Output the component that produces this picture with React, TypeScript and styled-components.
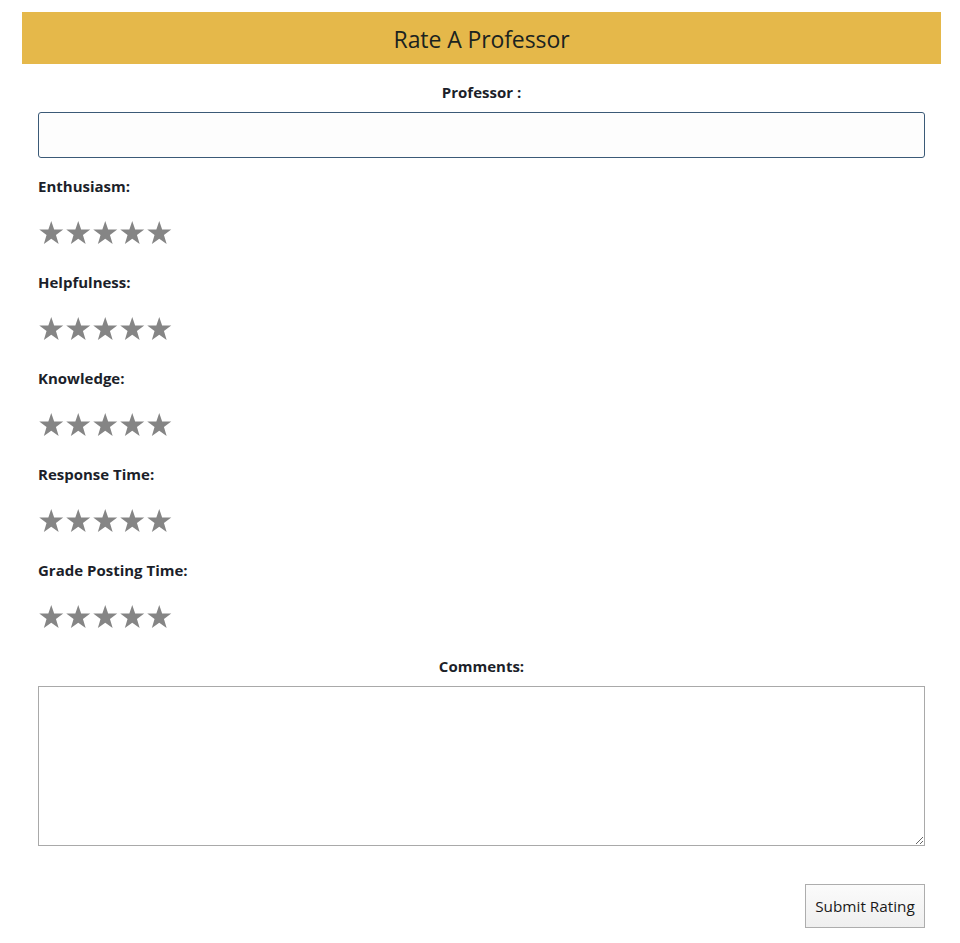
import React from "react";
import styled, { createGlobalStyle } from "styled-components";

const GlobalStyle = createGlobalStyle`
  html, body {
    margin: 0;
    padding: 0;
    background: #ffffff;
  }
  body {
    font-family: "Open Sans", "Noto Sans", "Liberation Sans", sans-serif;
    color: #1c1f2a;
  }
`;

const Page = styled.div`
  padding: 12px 19px 16px 22px;
`;

const Header = styled.header`
  height: 52px;
  background: #e5b84a;
  display: flex;
  align-items: center;
  justify-content: center;
`;

const Title = styled.h1`
  margin: 0;
  font-size: 23px;
  font-weight: 400;
  color: #1a2320;
  letter-spacing: -0.1px;
  line-height: 30px;
  padding-top: 2px;
`;

const Form = styled.form`
  display: flex;
  flex-direction: column;
  padding: 18px 16px 0;
`;

const Label = styled.label<{ $center?: boolean }>`
  display: block;
  font-size: 15px;
  line-height: 20px;
  font-weight: 700;
  color: #1c1f2a;
  text-align: ${(p) => (p.$center ? "center" : "left")};
`;

const TextInput = styled.input`
  box-sizing: border-box;
  margin-top: 10px;
  width: 100%;
  height: 46px;
  border: 1px solid #3b5a77;
  border-radius: 3px;
  background: #fdfdfd;
  outline: none;
  font: inherit;
  padding: 0 10px;
`;

const RatingGroup = styled.div`
  margin-top: 18px;
  display: flex;
  flex-direction: column;

  & + & {
    margin-top: 28px;
  }
`;

const Stars = styled.div`
  margin-top: 24px;
  display: flex;
  gap: 2.5px;
  height: 24px;
  align-items: center;
  padding-left: 1px;
`;

const StarIcon = styled.svg`
  width: 24.5px;
  height: 23px;
  display: block;
  fill: #858585;
`;

const CommentsBlock = styled.div`
  margin-top: 28px;
  display: flex;
  flex-direction: column;
`;

const TextArea = styled.textarea`
  box-sizing: border-box;
  margin-top: 10px;
  width: 100%;
  height: 160px;
  border: 1px solid #a9a9a9;
  border-radius: 0;
  background: #ffffff;
  font: inherit;
  resize: both;
  outline: none;
`;

const ButtonRow = styled.div`
  margin-top: 38px;
  display: flex;
  justify-content: flex-end;
`;

const SubmitButton = styled.button`
  width: 120px;
  height: 44px;
  border: 1px solid #adadad;
  border-radius: 0;
  background: linear-gradient(#fbfbfb, #efefef);
  font-family: "Open Sans", "Noto Sans", sans-serif;
  font-size: 15.3px;
  color: #1a1a1a;
  padding: 0;
  cursor: pointer;
`;

const Star = () => (
  <StarIcon viewBox="0 0 24 23" aria-hidden="true">
    <polygon points="12,0 14.9,8.4 24,8.6 16.7,14 19.4,23 12,17.7 4.6,23 7.3,14 0,8.6 9.1,8.4" />
  </StarIcon>
);

const categories = [
  "Enthusiasm:",
  "Helpfulness:",
  "Knowledge:",
  "Response Time:",
  "Grade Posting Time:",
];

export default function App() {
  return (
    <>
      <GlobalStyle />
      <Page>
        <Header>
          <Title>Rate A Professor</Title>
        </Header>
        <Form onSubmit={(e) => e.preventDefault()}>
          <Label $center htmlFor="professor">Professor :</Label>
          <TextInput id="professor" type="text" />
          {categories.map((c) => (
            <RatingGroup key={c}>
              <Label>{c}</Label>
              <Stars>
                {[0, 1, 2, 3, 4].map((i) => (
                  <Star key={i} />
                ))}
              </Stars>
            </RatingGroup>
          ))}
          <CommentsBlock>
            <Label $center htmlFor="comments">Comments:</Label>
            <TextArea id="comments" />
          </CommentsBlock>
          <ButtonRow>
            <SubmitButton type="submit">Submit Rating</SubmitButton>
          </ButtonRow>
        </Form>
      </Page>
    </>
  );
}
